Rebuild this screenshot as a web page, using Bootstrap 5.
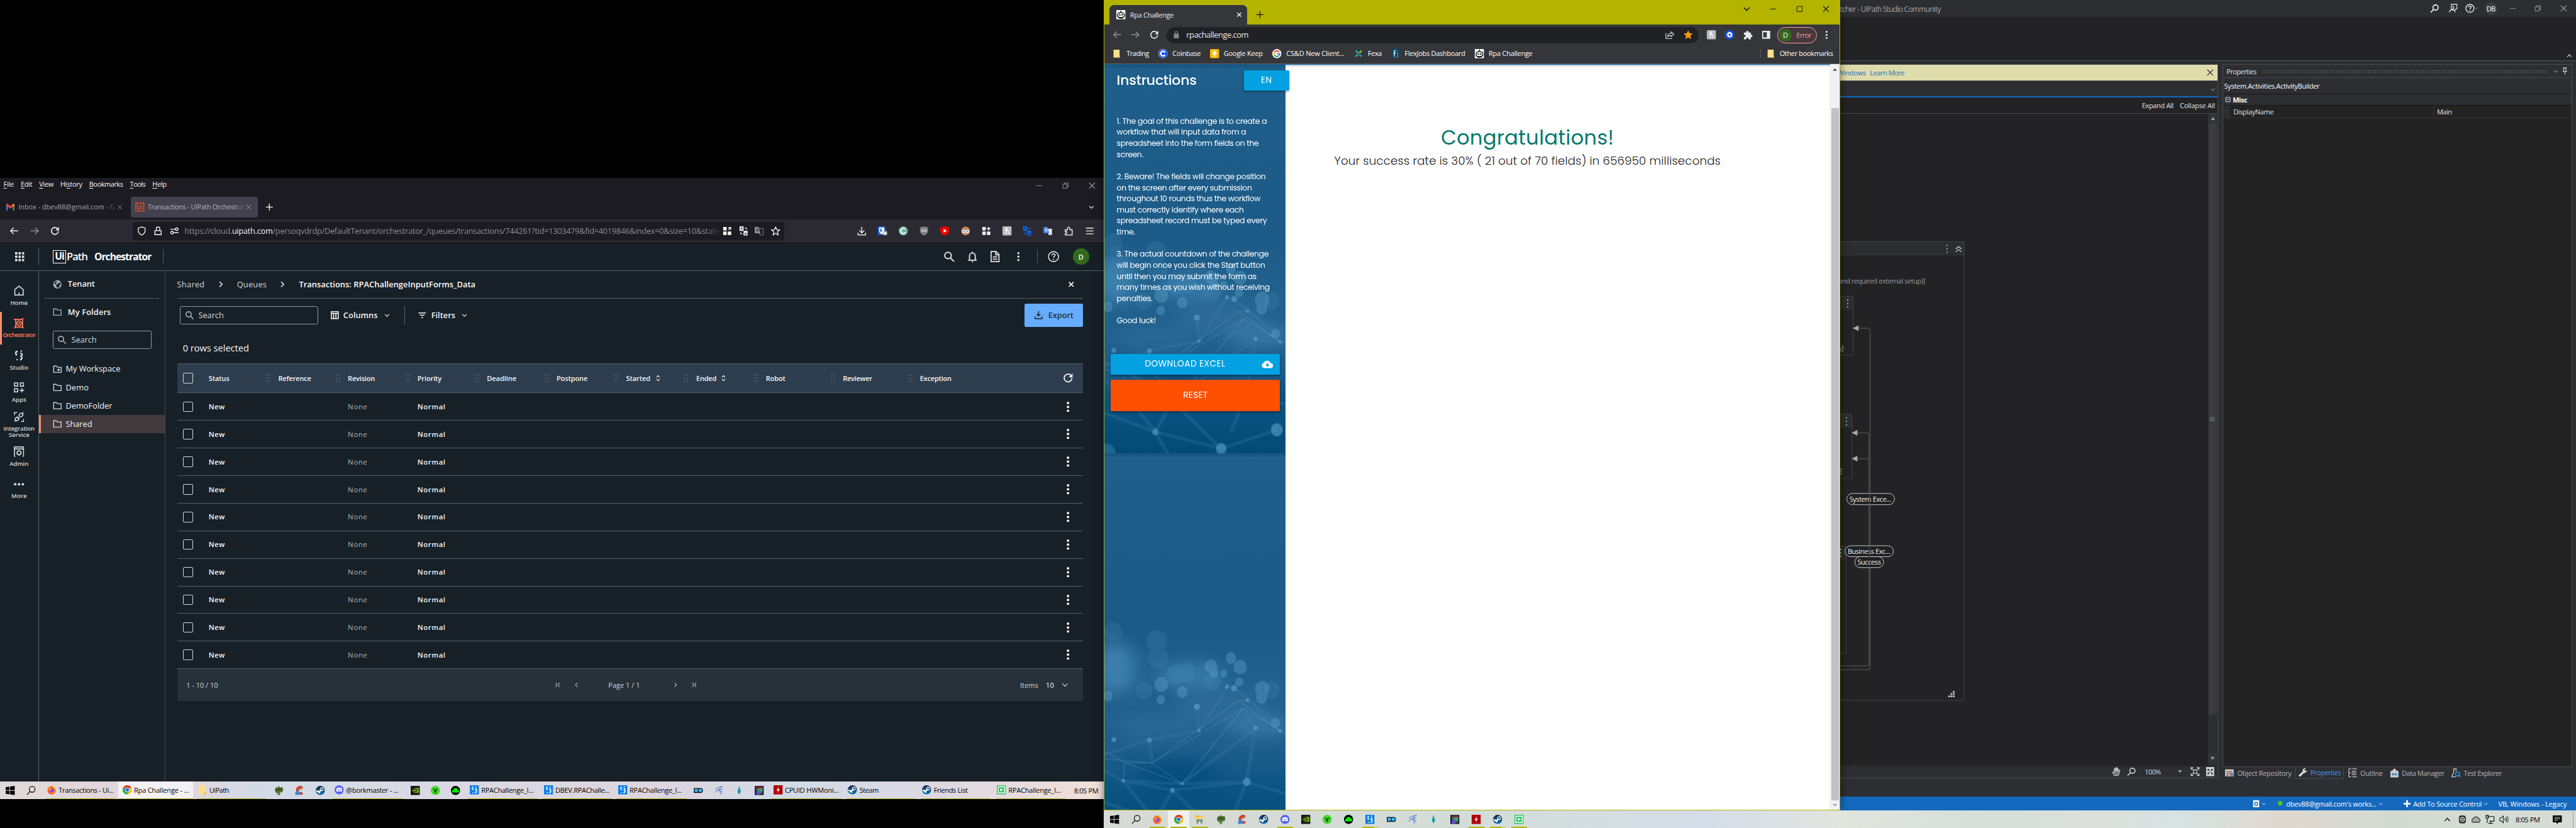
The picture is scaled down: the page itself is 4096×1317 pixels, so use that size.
<!DOCTYPE html>
<html lang="en">
<head>
<meta charset="utf-8">
<title>Desktop</title>
<link href="https://cdn.jsdelivr.net/npm/bootstrap@5.3.0/dist/css/bootstrap.min.css" rel="stylesheet">
<style>
html,body{margin:0;background:#000;overflow:hidden}
#zoomer{zoom:.9142857;width:4480px;height:1441px;overflow:hidden}
#desk{width:4480px;height:1441px;position:relative;background:#000;font:12px/1.2 "Open Sans","Noto Sans",sans-serif;color:#fff;overflow:hidden}
#desk *{letter-spacing:inherit}
.win{position:absolute;overflow:hidden}
.bar{display:grid;align-items:center;justify-items:start;white-space:nowrap;align-content:center}
.ic{width:16px;height:16px;fill:currentColor;stroke:none;display:block;flex:none;overflow:visible}
.i12{width:12px;height:12px}.i20{width:20px;height:20px}.i24{width:24px;height:24px}.i10{width:10px;height:10px}.i18{width:18px;height:18px}.i14{width:14px;height:14px}
.fade-r{-webkit-mask-image:linear-gradient(90deg,#000 88%,transparent);mask-image:linear-gradient(90deg,#000 88%,transparent)}
.cut{line-height:24px}
/* firefox */
.ff{left:0;top:310px;width:1920px;height:1080px;background:#1c1b22}
.ff-menu{height:28px;padding-left:6px;padding-bottom:7px;grid-template-columns:30px 32px 37px 50px 71px 39px 1534px 46px 46px 30px;font-size:12px;color:#f4f4f8}
.ff-menu u{text-underline-offset:2px}
.ff-menu .ic{color:#9a9aa2;margin-top:6px}
.ff-strip{height:44px;grid-template-columns:227px 234px 1431px 28px}
.ff-tab{height:36px;width:221px;border-radius:4px;grid-template-columns:22px 171px 20px;padding-left:8px;color:#b8b8c0}
.ff-tab.first{padding-left:10px;grid-template-columns:22px 170px 20px;color:#a9a8b4}
.ff-tab.on{background:#42414d;grid-template-columns:22px 170px 20px}
.ff-tab .cut{width:170px;overflow:hidden}
.ff-nav{height:40px;background:#2b2a33;grid-template-columns:36px 36px 143px 1260px repeat(12,36px);padding-left:16px;color:#f0f0f5}
.ff-url{height:32px;width:1133px;background:#1c1b22;border-radius:4px;grid-template-columns:28px 28px 26px 936px 28px 28px 28px 28px;padding-left:8px;font-size:14px;color:#908f99}
.ff-url b{font-weight:400;color:#fbfbfe}
.ff-url .cut{width:934px;-webkit-mask-image:linear-gradient(90deg,#000 97%,transparent);mask-image:linear-gradient(90deg,#000 97%,transparent)}
/* orchestrator */
.orch{background:#182027;height:938px;border-top:1px solid #0c0c0d;font-family:"Open Sans","Noto Sans",sans-serif;color:#f4f5f7}
.o-head{height:48px;border-bottom:1px solid #526069;grid-template-columns:41px 25px 24px 48px 119px 1358px 40px 40px 42px 41px 18px 44px 40px;padding-left:26px;color:#dfe4e8}
.vline{width:1px;background:#526069;height:28px}
.vline.s{height:24px}
.o-logo{font:700 17px/18px "Open Sans",sans-serif;border:2px solid #fff;width:23px;height:23px;color:#fff;text-align:center}
.o-name{font-size:18px;line-height:22px;color:#fff;font-weight:600}
.o-name.b{font-size:17px;font-weight:700}
.rail{width:68px;height:889px;border-right:1px solid #526069;padding-top:16px;color:#cfd8dd;font-weight:600;font-size:10.5px;line-height:10px}
.rail div{height:56px;border-left:4px solid transparent;padding-right:4px;padding-top:10px;display:flex;flex-direction:column;align-items:center;text-align:center;gap:7px;white-space:nowrap}
.rail div.on{border-color:#ff8d6f;color:#ff7a59}
.rail .two{padding-top:5px}
.tree{width:220px;border-right:1px solid #3f4b54;font-size:14px}
.tree .t1{height:48px;margin:0 10px;border-bottom:1px solid #526069;grid-template-columns:26px 1fr;padding-left:14px;font-weight:600}
.tree .t2{height:48px;grid-template-columns:26px 1fr;padding-left:24px;font-weight:600}
.tree .ic,.o-soft{color:#a4b1b8}
.o-box{border:1px solid #8b9aa3;border-radius:3px;height:32px;color:#cfd8dd;font-size:14px}
.tree .o-box{margin:8px 0 19px 24px;width:172px;grid-template-columns:24px 1fr;padding-left:7px}
.tree .leaf{height:32px;grid-template-columns:22px 1fr;padding-left:21px;border-left:4px solid transparent}
.tree .leaf .ic{color:#cfd8dd}
.tree .leaf.on{background:#41393c;border-color:#ff8d6f}
.main{padding:0 37px 0 20px;width:1632px}
.crumb{height:49px;border-bottom:1px solid #526069;grid-template-columns:68px 36px 72px 36px 1335px 16px;font-size:14px;font-weight:500;color:#cfd8dd}
.crumb b{font-weight:600;color:#fff}
.acts{height:57px;grid-template-columns:261px 23px 70px 36px 23px 24px 52px 980px 101px;padding-left:5px;font-size:14px;font-weight:600}
.acts .vline{height:32px}
.acts .o-box{width:240px;grid-template-columns:24px 1fr;padding-left:7px;font-weight:400}
.x-export{height:40px;width:101px;background:#66adff;color:#273139;border-radius:3px;padding-left:16px;grid-template-columns:25px 1fr}
.rowsel{height:55px;font-size:16px;padding:19px 0 0 10px}
.th-bar{height:52px;background:#2e3d4d;border:1px solid #526069;border-width:1px 0;font-size:12px;font-weight:600;padding-left:10px;grid-template-columns:45px 99px 22px 99px 22px 99px 22px 99px 22px 99px 22px 99px 22px 50px 49px 23px 42px 57px 22px 112px 22px 112px 22px 249px 26px}
.grip{width:10px;height:16px;background:radial-gradient(circle,#4a5a6a 1.1px,transparent 1.5px) 0 0/5px 5.3px}
.tr-bar{height:48px;border-bottom:1px solid #526069;font-size:12.5px;font-weight:600;padding-left:10px;grid-template-columns:45px 242px 121px 1122px 20px}
.tr-bar .n{font-weight:400;color:#aab6bd}
.cbx{width:18px;height:18px;border:2px solid #cfd8dd;border-radius:2px}
.foot{height:56px;background:#273139;font-size:12px;color:#cfd8dd;grid-template-columns:638px 32px 64px 109px 32px 575px 45px 26px 20px;padding-left:16px}
/* taskbars */
.tb{height:30px;color:#000;font-size:12px}
.tb-l{background:linear-gradient(90deg,#e0d9d9,#e4d5dc 15%,#d2dbe6 24%,#dbd8e2 45%,#ddd5df 60%,#d2dbe6 72%,#ddd8e2 85%,#f2dfd8);grid-template-columns:36px 43px 127px 135px 126px 36px 36px 40px 125px 35px 35px 40px 129px 129px 125px 36px 35px 35px 39px 130px 129px 130px 137px 52px}
.cell{width:36px;height:30px;display:flex;align-items:center;justify-content:center}
.task{width:122px;height:30px;display:flex;align-items:center;gap:4px;padding-left:3px;border-bottom:2px solid #b3b300}
.task.on{background:#f4f1f5;width:130px;padding-left:7px}
.tb-r{left:1920px;top:1410px;width:2560px;height:31px;background:linear-gradient(90deg,#d7d9d5,#d3ddd7 25%,#d4dde8 41%,#e2e4de 50%,#d4dfd8 60%,#dcdfda 67%,#d6e2e1 73%,#dfd8d0 80%,#d2dad2 88%,#d6dcd5);display:flex;align-items:center;justify-content:space-between}
.tb-r .cell{width:37px;height:31px;border-bottom:3px solid transparent;padding-top:3px;position:relative}
.tb-r .run::after{content:"";position:absolute;left:5px;bottom:-3px;width:28px;height:3px;background:#b3b300}
.tb-r .run.two::after{background:linear-gradient(90deg,#b3b300 72%,#cdcd70 72%)}
.tb-r .cell.on{background:#f0f1ef}
.tray{grid-template-columns:25px 24px 24px 24px 29px 64px 36px 5px;height:31px}
.tray .edge{height:31px;width:1px;background:#9aa09b}
/* chrome */
.ch{left:1920px;top:0;width:1280px;height:1410px;background:#35363a;border:1px solid #b3b300;border-top:0;overflow:visible;box-shadow:0 0 14px rgba(0,0,0,.5)}
.ch-top{height:43px;background:#b3b300;grid-template-columns:254px 847px 46px 46px 46px 24px;padding-left:8px;color:#111}
.ch-tab{height:34px;width:240px;margin-top:9px;border-radius:8px 8px 0 0;background:#35363a;grid-template-columns:24px 183px 14px;padding-left:12px;color:#eee}
.ch-top .up{margin-bottom:12px}
.ch-top .pl{margin-top:9px}
.ch-nav{height:36px;grid-template-columns:32px 32px 30px 939px 32px 32px 32px 27px 79px 20px;padding-left:14px;color:#e8eaed}
.ch-omni{height:28px;width:925px;border-radius:14px;background:#202124;grid-template-columns:24px 833px 32px 20px;padding-left:10px;font-size:14px}
.ch-err{height:28px;width:69px;border-radius:14px;border:1px solid #f5a199;background:#46383c;color:#f5a199;grid-template-columns:30px 1fr;padding-left:2px}
.ava{border-radius:50%;background:#33691e;color:#fff;display:grid;place-items:center}
.ch-err .ava{width:22px;height:22px;font-size:12px}
.ava28{width:28px;height:28px;font-size:12px;font-weight:600}
.ch-bm{height:33px;border-bottom:1px solid #5f6368;grid-template-columns:24px 56px 24px 65px 24px 85px 24px 118px 24px 40px 24px 122px 24px 472px 11px 23px 1fr;padding-left:14px;padding-bottom:4px}
.ch-bm .vline{height:16px}
.ch-page{height:1297px;background:#fff;display:flex;position:relative}
.ins{width:315px;height:1297px;position:relative;background:#1d5c89;font-family:Poppins,Lato,Inter,sans-serif}
.ins .sky{position:absolute;inset:0;overflow:hidden}
.ins .sky svg{display:block;width:315px;height:677px}
.ins .sky svg+svg{box-shadow:inset 0 3px 4px #0d4a72}
.ins .body-t{position:relative;padding:0 10px 0 11px}
.ins h5{font-size:24px;line-height:28px;font-weight:500;margin:1px 0 0 10px}
.ins .hd{height:90px;padding-top:13px}
.en{width:79px;height:36px;background:#03a1e2;border-radius:2px;display:grid;place-items:center;font-size:15px;margin-right:-16px;margin-top:-3px;box-shadow:0 2px 4px rgba(0,0,0,.35)}
.lines{margin-left:10px;font:13.5px/19.27px Poppins,Lato,sans-serif;height:415px;margin-top:-1px;font-weight:400}
.lines div{white-space:nowrap}
.x-down,.x-reset{display:grid;align-items:center;border-radius:2px;box-shadow:0 2px 4px rgba(0,0,0,.4);font-size:15px}
.x-down{height:36px;background:#03a1e2;grid-template-columns:200px 1fr;padding-left:59px;margin-bottom:9px;justify-items:start}
.x-down .ic{margin-left:3px;width:20px}
.x-reset{height:54px;background:#ff5000;justify-items:center}
.result{flex:1;text-align:center;border-top:2px solid #0b78c4;box-shadow:inset 0 3px 3px -1px #bbb;padding-top:103px;padding-right:106px;font-family:Poppins,Lato,sans-serif}
.result .r1{font-size:35px;line-height:46px;color:#00796b;font-weight:400}
.result .r2{font-size:20px;line-height:24px;color:#212121;margin-top:6px;font-weight:300}
.sb{width:16px;background:#f1f1f1;padding:76px 1px 0 2px;position:relative}
.sb .thumb{height:1204px;background:#c1c1c1}
.sb svg{position:absolute;left:4px}
.sb .a1{top:5px}.sb .a2{bottom:4px}
/* studio */
.st{left:3200px;top:0;width:1280px;height:1410px;background:#2d2e32;color:#e0e0e0}
.st-top{height:30px;grid-template-columns:1026px 32px 29px 16px 18px 41px 44px 44px 20px;color:#a0a0a0;font-size:13px}
.st-top .ava{width:22px;height:22px;background:#3c3e42;color:#fff;font-size:12px}
.st-rib{height:76px;background:#232325;border-bottom:1px solid #55565a;display:flex;justify-content:flex-end;align-items:flex-end;padding:0 5px 2px}
.st-mid{display:flex;gap:7px;padding-top:6px;height:1249px}
.st-doc{width:658px;border-right:1px solid #4a4b50;height:1243px}
.st-warn{height:29px;background:#dfdcac;border-bottom:1px solid #4a4b50;border-top:1px solid #4a4b50;color:#1a72bd;grid-template-columns:52px 584px 16px}
.st-warn .clip-l{width:45px;overflow:hidden;direction:rtl}
.st-crumb{height:26px;display:flex;justify-content:flex-end;align-items:center;padding:4px 4px 0}
.st-exp{height:31px;border-top:3px solid #1468bd;border-bottom:1px solid #4a4b50;background:#232325;grid-template-columns:66px 62px;padding-left:525px}
.st-can{height:1134px;background:#232325;display:flex}
.st-can>svg{width:640px;height:1134px}
.st-sb{width:16px;background:#2d2e32;display:flex;flex-direction:column;align-items:center;color:#8a8b90}
.st-sb .ar{height:17px;display:grid;place-items:center;background:#333438;width:16px}
.st-sb .th{height:1029px;width:14px;background:#3b3b40;display:grid;place-items:center}
.st-zoom{height:22px;border-bottom:1px solid #4a4b50;grid-template-columns:26px 31px 58px 22px 26px 20px;padding-left:473px;color:#d0d0d0}
.st-prop{width:608px;height:1222px;border:1px solid #4a4b50;background:#232323}
.pr-t{height:23px;background:#2d2e32;border-bottom:1px solid #4a4b50;grid-template-columns:61px 506px 14px 20px;padding-left:6px}
.dotline{width:498px;height:6px;background:radial-gradient(circle,#77787c .8px,transparent 1.1px) 0 0/4px 3px}
.pr-s{height:28px;background:#2d2e32;border-bottom:1px dotted #000;padding-left:2px}
.pr-m{height:20px;background:#2d2e32;border-bottom:1px dotted #000;grid-template-columns:15px 1fr;padding-left:2px}
.pr-d{height:22px;border-bottom:1px solid #333;border-left:13px solid #2d2e32;grid-template-columns:348px 1fr;padding-left:6px}
.pr-d>:last-child{border-left:1px solid #333;padding-left:5px;line-height:21px}
.st-tabs{height:21px;grid-template-columns:21px 100px 88px 22px 51px 21px 87px 21px 80px;padding-left:5px;color:#b4b5b9}
.st-tabs .on{height:21px;width:85px;border:1px solid #4a4b50;border-top:0;color:#3b9fee;padding-left:4px;grid-template-columns:22px 1fr}
.st-blue{margin-top:31px;height:24px;background:#1469be;color:#fff;grid-template-columns:15px 30px 14px 160px 42px 19px 121px 27px 120px;padding-left:717px}
</style>
<script src="https://cdn.jsdelivr.net/npm/bootstrap@5.3.0/dist/js/bootstrap.bundle.min.js"></script>
</head>
<body>
<svg width="0" height="0" class="position-absolute">
<defs>
<filter id="b30" x="-50%" y="-50%" width="200%" height="200%"><feGaussianBlur stdDeviation="34"/></filter>
<filter id="b4"><feGaussianBlur stdDeviation="4"/></filter>
<linearGradient id="sea" x1="0" y1="0" x2="0" y2="1"><stop offset="0" stop-color="#1e5f8b"/><stop offset=".1" stop-color="#1f5e8a"/><stop offset=".45" stop-color="#1c5b88"/><stop offset=".6" stop-color="#23628f"/><stop offset=".75" stop-color="#205f8e"/><stop offset=".86" stop-color="#0b5482"/><stop offset="1" stop-color="#034b76"/></linearGradient>
<linearGradient id="stm" x1="0" y1="0" x2="0" y2="1"><stop offset="0" stop-color="#16214a"/><stop offset="1" stop-color="#1379b8"/></linearGradient>
<symbol id="tile" viewBox="46 -322 707 1966" preserveAspectRatio="none">
<path fill="url(#sea)" d="M46-322h707v1966H46z"/>
<g filter="url(#b30)"><ellipse cx="90" cy="760" rx="75" ry="130" fill="#4a8dbb" opacity=".7"/><ellipse cx="380" cy="800" rx="130" ry="70" fill="#4387b7" opacity=".6"/><ellipse cx="500" cy="960" rx="170" ry="90" fill="#37749f" opacity=".5"/><ellipse cx="650" cy="1050" rx="130" ry="60" fill="#4380ad" opacity=".6"/><ellipse cx="250" cy="1060" rx="160" ry="60" fill="#2f6d9c" opacity=".6"/><ellipse cx="330" cy="1300" rx="150" ry="80" fill="#004a77" opacity=".6"/></g>
<g stroke="#3f7fac" opacity=".3" stroke-width="14" filter="url(#b4)" fill="none"><path d="M46 1200 222 1126 416 1078 525 860M552 865 715 1040M407 958 416 1078M222 1126 232 1243M350 1345 636 1068 600 1338 350 1348 120 1333 46 1280M636 1068 760 1090M312 1380 600 1340 760 1400M312 1380 120 1333 245 1536 46 1440M312 1380 245 1536 300 1660M312 1380 502 1621 719 1525M600 1340 540 1540M502 1621 245 1536M636 1068 588 965"/></g>
<g stroke="#6aa6ce" opacity=".45" stroke-width="2.500" fill="none"><path d="M46 1185 125 1240 232 1243 588 965 350 1347 125 1240 120 1333M46 1222 232 1243 570 928 732 1080M232 1243 350 1347M588 965 732 1080M570 928 605 926"/></g>
<g fill="#5fa3cc" opacity=".14"><ellipse cx="250" cy="625" rx="40" ry="54"/><ellipse cx="255" cy="710" rx="40" ry="54"/><ellipse cx="80" cy="580" rx="36" ry="48"/><ellipse cx="325" cy="795" rx="36" ry="50"/><ellipse cx="365" cy="785" rx="36" ry="48"/><ellipse cx="200" cy="875" rx="32" ry="44"/><ellipse cx="468" cy="830" rx="34" ry="44"/><ellipse cx="700" cy="875" rx="30" ry="44"/></g>
<g fill="#5fa8d0" opacity=".36"><ellipse cx="60" cy="904" rx="18" ry="27"/><ellipse cx="268" cy="846" rx="27" ry="38"/><ellipse cx="266" cy="923" rx="17" ry="24"/><ellipse cx="350" cy="884" rx="21" ry="29"/><ellipse cx="462" cy="754" rx="25" ry="33"/><ellipse cx="474" cy="788" rx="17" ry="24"/><ellipse cx="512" cy="792" rx="13" ry="19"/><ellipse cx="540" cy="713" rx="20" ry="30"/><ellipse cx="576" cy="758" rx="26" ry="36"/><ellipse cx="572" cy="833" rx="16" ry="23"/><ellipse cx="662" cy="868" rx="28" ry="40"/><ellipse cx="660" cy="913" rx="22" ry="30"/><ellipse cx="714" cy="1040" rx="18" ry="25"/></g>
<g fill="#62a8d0" opacity=".55"><ellipse cx="525" cy="856" rx="8" ry="11"/><ellipse cx="552" cy="865" rx="12" ry="16"/><ellipse cx="407" cy="958" rx="12" ry="16"/><ellipse cx="605" cy="925" rx="7" ry="9"/><ellipse cx="416" cy="1078" rx="6" ry="9"/><ellipse cx="222" cy="1127" rx="9" ry="13"/><ellipse cx="83" cy="1124" rx="9" ry="13"/><ellipse cx="732" cy="1080" rx="7" ry="9"/><ellipse cx="636" cy="1066" rx="8" ry="10"/><ellipse cx="350" cy="1347" rx="6" ry="8"/><ellipse cx="312" cy="1380" rx="9" ry="13"/><ellipse cx="120" cy="1333" rx="7" ry="9"/><ellipse cx="602" cy="1338" rx="15" ry="21"/><ellipse cx="245" cy="1536" rx="12" ry="17"/><ellipse cx="719" cy="1525" rx="23" ry="33"/><ellipse cx="502" cy="1621" rx="20" ry="29"/><ellipse cx="52" cy="1640" rx="38" ry="46" opacity=".5"/></g>
<path d="M46-322h707v16H46z" fill="#0d4a72" opacity=".3"/>
</symbol>
<symbol id="min" viewBox="0 0 16 16"><path d="M3 8h10" stroke="currentColor"/></symbol>
<symbol id="max" viewBox="0 0 16 16"><path d="M3.500 3.500h9v9h-9z" fill="none" stroke="currentColor"/></symbol>
<symbol id="rest" viewBox="0 0 16 16"><path d="M3.500 5.500h7v7h-7zM5.500 5V3.500h7v7H11" fill="none" stroke="currentColor"/></symbol>
<symbol id="x" viewBox="0 0 16 16"><path d="M3 3l10 10M13 3L3 13" fill="none" stroke="currentColor" stroke-width="1.200"/></symbol>
<symbol id="xb" viewBox="0 0 16 16"><path d="M4 4l8 8M12 4L4 12" fill="none" stroke="currentColor" stroke-width="1.800"/></symbol>
<symbol id="plus" viewBox="0 0 16 16"><path d="M8 2v12M2 8h12" fill="none" stroke="currentColor" stroke-width="1.400"/></symbol>
<symbol id="dn" viewBox="0 0 16 16"><path d="M3 5.500l5 5 5-5" fill="none" stroke="currentColor" stroke-width="1.500"/></symbol>
<symbol id="rt" viewBox="0 0 16 16"><path d="M5.500 3.500l4.500 4.500-4.500 4.500" fill="none" stroke="currentColor" stroke-width="1.800"/></symbol>
<symbol id="lt" viewBox="0 0 16 16"><path d="M10 4.500L6.500 8l3.500 3.500" fill="none" stroke="currentColor" stroke-width="1.300"/></symbol>
<symbol id="gt" viewBox="0 0 16 16"><path d="M6 4.500L9.500 8 6 11.500" fill="none" stroke="currentColor" stroke-width="1.300"/></symbol>
<symbol id="ltl" viewBox="0 0 16 16"><path d="M11 4.500L7.500 8l3.500 3.500M5 4v8" fill="none" stroke="currentColor" stroke-width="1.300"/></symbol>
<symbol id="rtl" viewBox="0 0 16 16"><path d="M5 4.500L8.500 8 5 11.500M11 4v8" fill="none" stroke="currentColor" stroke-width="1.300"/></symbol>
<symbol id="up" viewBox="0 0 16 16"><path d="M3 11l5-5.500 5 5.500" fill="none" stroke="currentColor" stroke-width="1.600"/></symbol>
<symbol id="back" viewBox="0 0 16 16"><path d="M15 8H2M7.500 2.500L2 8l5.500 5.500" fill="none" stroke="currentColor" stroke-width="1.600"/></symbol>
<symbol id="fwd" viewBox="0 0 16 16"><path d="M1 8h13M8.500 2.500L14 8l-5.500 5.500" fill="none" stroke="currentColor" stroke-width="1.600"/></symbol>
<symbol id="rel" viewBox="0 0 16 16"><path d="M14 8.500a6 6 0 1 1-2-5l2 2" fill="none" stroke="currentColor" stroke-width="1.800"/><path d="M15 1v6H9z"/></symbol>
<symbol id="shield" viewBox="0 0 16 16"><path d="M8 1l6 2.200v3.500c0 4-2.500 7-6 8.500-3.500-1.500-6-4.500-6-8.500V3.200z" fill="none" stroke="currentColor" stroke-width="1.400"/></symbol>
<symbol id="lock" viewBox="0 0 16 16"><path d="M2.500 7.500h11v7h-11zM5 7V4a3 3 0 0 1 6 0v3" fill="none" stroke="currentColor" stroke-width="1.500"/></symbol>
<symbol id="lockf" viewBox="0 0 16 16"><path d="M3 6h10v9H3z"/><path d="M5.500 7V4a2.500 2.500 0 0 1 5 0v3" fill="none" stroke="currentColor" stroke-width="1.500"/></symbol>
<symbol id="perm" viewBox="0 0 16 16"><g fill="none" stroke="currentColor" stroke-width="1.500"><path d="M1 5h8M7 11h8"/><circle cx="12" cy="5" r="2.300"/><circle cx="4" cy="11" r="2.300"/></g></symbol>
<symbol id="sq4" viewBox="0 0 16 16"><path d="M1 1h6v6H1zM9 9h6v6H9zM1 9h6v6H1z"/><path d="M10 6l4-4m-4 0h4v4" fill="none" stroke="currentColor" stroke-width="1.500"/></symbol>
<symbol id="sqp" viewBox="0 0 16 16"><path d="M1 1h6v6H1zM9 9h6v6H9zM1 9h6v6H1zM11 1h2v6h-2zM9 3h6v2H9z"/></symbol>
<symbol id="tr1" viewBox="0 0 16 16"><path d="M1 0h7v8H1zM8 8h7v8H8z"/><path d="M10 3h3v3M6 13H3v-3" fill="none" stroke="currentColor" stroke-width="1.300"/><path d="M2.500 2.500h4M4.500 1.500v1c0 2-1 3-2 3.500M3.500 3c.5 2 1.500 3 3 3.500M10 11.500c2-1 3 0 3 1v2c-3 .5-3.500-.5-3-1.500.5-.7 1.500-.5 3-.5" fill="none" stroke="#1c1b22" stroke-width=".8"/></symbol>
<symbol id="tr2" viewBox="0 0 16 16"><path d="M6 4h9v11H9z" fill="none" stroke="currentColor"/><path d="M0 1h7l3 11H0z"/><path d="M3 9l2-6 2 6M3.700 7.500h2.500M10 8h4M12 7c0 3-1 4-2 5" fill="none" stroke="#1c1b22" stroke-width=".9"/></symbol>
<symbol id="tr3" viewBox="0 0 16 16"><path d="M7 4h8v11H9z" fill="#dfe3ea"/><path d="M0 1h7l3 11H0z" fill="#3f7df0"/><path d="M3 9l2-6 2 6M3.700 7.500h2.500M10 8h4M12 7c0 3-1 4-2 5" fill="none" stroke="#fff" stroke-width="1"/></symbol>
<symbol id="star" viewBox="0 0 16 16"><path d="M8 1l2 4.800 5 .4-3.800 3.300L12.400 15 8 12l-4.400 3 1.200-5.500L1 6.200l5-.4z" fill="none" stroke="currentColor" stroke-width="1.400"/></symbol>
<symbol id="starf" viewBox="0 0 16 16"><path d="M8 0l2.300 5.300 5.700.6-4.200 3.800L13 15.500 8 12.500l-5 3 1.200-5.800L0 5.900l5.700-.6z" fill="#f99b0c"/></symbol>
<symbol id="dl" viewBox="0 0 16 16"><path d="M8 1v10M3.500 7L8 11.500 12.500 7M1.500 11v4h13v-4" fill="none" stroke="currentColor" stroke-width="1.500"/></symbol>
<symbol id="bw" viewBox="0 0 16 16"><path fill="#175ddc" d="M0 0h13v15H0z"/><path fill="#fff" d="M2 2h9v6c0 3-3 5-4.500 6C5 13 2 11 2 8z"/><path fill="#175ddc" d="M4 4h2.500v7C5 10 4 9 4 8z"/><path d="M9 9h7v6H9z" fill="#ddd"/><path d="M10.500 9V8a2 2 0 0 1 4 0v1" fill="none" stroke="#999"/></symbol>
<symbol id="cc1" viewBox="0 0 16 16"><circle cx="8" cy="8" r="8" fill="#6fb59a"/><path d="M11.500 5a4.500 4.500 0 1 0 .5 5" fill="none" stroke="#fff" stroke-width="2"/></symbol>
<symbol id="ub" viewBox="0 0 16 16"><path d="M8 0l7 2v5c0 5-3 7.500-7 9-4-1.500-7-4-7-9V2z" fill="#7f7f7f"/><path d="M4 5v3c0 2 3 2 3 0V5M10.500 5.500a1.500 2 0 1 0 .1 0z" fill="none" stroke="#fff"/></symbol>
<symbol id="yt" viewBox="0 0 16 16"><path d="M8 0l8 2v5c0 5-4 8-8 9-4-1-8-4-8-9V2z" fill="#e00"/><path fill="#fff" d="M6 4.500l5.500 3.300L6 11z"/></symbol>
<symbol id="face" viewBox="0 0 16 16"><circle cx="8" cy="8" r="7.500" fill="#c98a61"/><circle cx="4.800" cy="9" r="3" fill="#eee"/><circle cx="11.200" cy="9" r="3" fill="#eee"/><circle cx="4.800" cy="9" r="1.200" fill="#3d7d8c"/><circle cx="11.200" cy="9" r="1.200" fill="#3d7d8c"/></symbol>
<symbol id="honey" viewBox="0 0 16 16"><rect width="16" height="16" rx="2" fill="#bcbcbc"/><path d="M6 3v10M6 9c1-3 4-3 4 0 0 2-.3 3 1.500 3.500M6 3c3-1 3 3 0 5" fill="none" stroke="#fff" stroke-width="1.300"/></symbol>
<symbol id="puz" viewBox="0 0 16 16"><path d="M2 6h4V3.500a2 2 0 0 1 4 0V6h4v9H2v-3h1.500a1.500 1.500 0 0 0 0-3H2z" fill="none" stroke="currentColor" stroke-width="1.500"/></symbol>
<symbol id="puzf" viewBox="0 0 16 16"><path d="M1 4h4V3a2 2 0 0 1 4 0v1h4v4h1a2 2 0 0 1 0 4h-1v4H9v-1a2 2 0 0 0-4 0v1H1v-4h1a2 2 0 0 0 0-4H1z"/></symbol>
<symbol id="burg" viewBox="0 0 16 16"><path d="M2 3h13M2 8h13M2 13h13" stroke="currentColor" stroke-width="1.500"/></symbol>
<symbol id="gm" viewBox="0 0 16 16"><path d="M1 14V3l2.500 2v9z" fill="#4285f4"/><path d="M12.500 14V5L15 3v11z" fill="#34a853"/><path d="M1 3l2-1 5 4.500L13 2l2 1v2L8 11 1 5z" fill="#ea4335"/><path d="M12.500 4.500L15 3v3l-2.500 2z" fill="#fbbc04"/></symbol>
<symbol id="ui" viewBox="0 0 16 16"><path d="M1 1h14v14H1z" fill="none" stroke="#fa4616" stroke-width="1.600"/><path d="M4 4v5c0 3.500 4.500 3.500 4.500 0V4M11.500 6.500V12M11.500 3.500v1.500" fill="none" stroke="#fa4616" stroke-width="1.600"/></symbol>
<symbol id="g9" viewBox="0 0 16 16"><path d="M0 0h4v4H0zM6 0h4v4H6zM12 0h4v4h-4zM0 6h4v4H0zM6 6h4v4H6zM12 6h4v4h-4zM0 12h4v4H0zM6 12h4v4H6zM12 12h4v4h-4z"/></symbol>
<symbol id="find" viewBox="0 0 16 16"><g fill="none" stroke="currentColor" stroke-width="1.800"><circle cx="6.500" cy="6.500" r="4.500"/><path d="M10 10l5 5"/></g></symbol>
<symbol id="bell" viewBox="0 0 16 16"><path d="M2 13h12M4 12.500V7a4 4 0 0 1 8 0v5.500M8 1v2M7 15.300h2" fill="none" stroke="currentColor" stroke-width="1.600"/></symbol>
<symbol id="doc" viewBox="0 0 16 16"><path d="M2.500 1h7L13.500 5v10h-11zM5 8.500h6M5 11.500h6M9 1v4.500h4" fill="none" stroke="currentColor" stroke-width="1.500"/></symbol>
<symbol id="d3" viewBox="0 0 16 16"><circle cx="8" cy="2" r="1.900"/><circle cx="8" cy="8" r="1.900"/><circle cx="8" cy="14" r="1.900"/></symbol>
<symbol id="h3" viewBox="0 0 16 16"><circle cx="2" cy="8" r="2"/><circle cx="8" cy="8" r="2"/><circle cx="14" cy="8" r="2"/></symbol>
<symbol id="help" viewBox="0 0 16 16"><circle cx="8" cy="8" r="7" fill="none" stroke="currentColor" stroke-width="1.400"/><path d="M5.800 6.300C5.800 3 10.400 3.300 10.200 6 10 7.600 8 7.700 8 9.600M8 11v1.500" fill="none" stroke="currentColor" stroke-width="1.400"/></symbol>
<symbol id="home" viewBox="0 0 16 16"><path d="M1.500 15V6.500L8 1l6.500 5.500V15zM8 15v-4" fill="none" stroke="currentColor" stroke-width="1.600"/></symbol>
<symbol id="orc" viewBox="0 0 16 16"><g fill="none" stroke="currentColor" stroke-width="1.700"><path d="M0 2h12l3-2M1 14h14M3 1v11l-2 4M13.500 2v12l1 2"/><circle cx="8.200" cy="8" r="3.500"/></g><circle cx="8.200" cy="8" r="1.400"/></symbol>
<symbol id="stu" viewBox="0 0 16 16"><path d="M6 2C2 2 2 6 5 7.500M10.500 1.500h2M10 8.500c3.500 2 3 6-.5 6.500M4 14.500h2M10 4.500c2 .5 3 2 3 4" fill="none" stroke="currentColor" stroke-width="2.300"/></symbol>
<symbol id="app" viewBox="0 0 16 16"><path d="M1 1h5v5H1zM10 1h5v5h-5zM1 10h5v5H1zM12.500 9v7M9 12.500h7" fill="none" stroke="currentColor" stroke-width="1.600"/></symbol>
<symbol id="int" viewBox="0 0 16 16"><g fill="none" stroke="currentColor" stroke-width="1.500"><path d="M1 5V1h4M15 11v4h-4M12.500 3.500L15 1M3.500 12.500L1 15M6 11l1.500-1.500M5 9.500l1.500-1.500"/><rect x="8" y="2.500" width="6" height="5" rx="2.500" transform="rotate(-45 11 5)"/><rect x="2" y="8.500" width="6" height="5" rx="2.500" transform="rotate(-45 5 11)"/></g></symbol>
<symbol id="adm" viewBox="0 0 16 16"><path d="M1 16V.8h14V16M1 4h14M1 16h2M15 16h-2" fill="none" stroke="currentColor" stroke-width="1.600"/><circle cx="8" cy="10" r="3" fill="none" stroke="currentColor" stroke-width="1.600"/><path d="M8 5.500v2M8 12.500v2M4.300 8l1.700 1M10 11l1.700 1M11.700 8L10 9M6 11l-1.700 1" stroke="currentColor" stroke-width="1.300"/></symbol>
<symbol id="globe" viewBox="0 0 16 16"><circle cx="8" cy="8" r="6.500" fill="none" stroke="currentColor" stroke-width="1.500"/><path d="M2 6l4 3v2l2 3-3-.5C2 12 1.500 9 2 6zM6 2h6v3l-3 1v2H6L5 6l2-1zM11 9l3 0-2 4z"/></symbol>
<symbol id="fol" viewBox="0 0 16 16"><path d="M1.500 2.500h4.500l2 2h6.500v9h-13z" fill="none" stroke="currentColor" stroke-width="1.500"/></symbol>
<symbol id="fols" viewBox="0 0 16 16"><path d="M1.500 2.500h4.500l2 2h6.500v9h-13z" fill="none" stroke="currentColor" stroke-width="1.500"/><path d="M10 6l.9 2 2.100.1-1.600 1.400.5 2L10 10.400l-1.900 1.100.5-2L7 8.100 9.100 8z"/></symbol>
<symbol id="cols" viewBox="0 0 16 16"><path d="M2 2h12v12H2zM2 5h12M6 5v9M10 5v9" fill="none" stroke="currentColor" stroke-width="1.700"/></symbol>
<symbol id="filt" viewBox="0 0 16 16"><path d="M1.500 4h13M4 8h8M6.500 12h3" stroke="currentColor" stroke-width="1.700"/></symbol>
<symbol id="exp" viewBox="0 0 16 16"><path d="M8 1v8M5 6l3 3.500L11 6M2 10v4h12v-4" fill="none" stroke="currentColor" stroke-width="1.900"/></symbol>
<symbol id="sort" viewBox="0 0 16 16"><path d="M4.500 6L8 2l3.500 4M4.500 10L8 14l3.500-4" fill="none" stroke="currentColor" stroke-width="1.500"/></symbol>
<symbol id="wn" viewBox="0 0 16 16"><path d="M0 2.200L6.500 1.300v6.200H0zM7.500 1.200L16 0v7.500H7.500zM0 8.500h6.500v6.200L0 13.800zM7.500 8.500H16V16l-8.500-1.200z" fill="#000"/></symbol>
<symbol id="tf" viewBox="0 0 16 16"><g fill="none" stroke="#000" stroke-width="1.300"><circle cx="10" cy="6" r="5"/><path d="M6.500 9.500L1 15.500"/></g></symbol>
<symbol id="ffx" viewBox="0 0 16 16"><circle cx="8" cy="8.500" r="7.500" fill="#ff7a1f"/><path d="M9 0c4 2 7 5 6.300 9.500C14 5 11 5 9 0z" fill="#ffd53e"/><path d="M1 5c1 7 4 10 9 10.500C5 17 0 13 1 5z" fill="#f0375c"/><circle cx="8" cy="8.500" r="3.600" fill="#8346d8"/><path d="M4 6c2-.5 4 .5 4 2l-3 1z" fill="#ffb12e"/></symbol>
<symbol id="chr" viewBox="0 0 16 16"><circle cx="8" cy="8" r="8" fill="#fbc116"/><path d="M8 8L1 4a8 8 0 0 1 14 0z" fill="#e33b2e"/><path d="M8 8L1 4a8 8 0 0 0 6.500 12L11.500 10z" fill="#2da94f"/><circle cx="8" cy="8" r="3.900" fill="#fff"/><circle cx="8" cy="8" r="3" fill="#1a73e8"/></symbol>
<symbol id="yf" viewBox="0 0 16 16"><path d="M2 0h12v16H2z" fill="#ffe08a"/><path d="M11 12h4v4h-4z" fill="#eac250"/></symbol>
<symbol id="efd" viewBox="0 0 16 16"><path d="M0 1h7l1 2h8v11H0z" fill="#f5b73b"/><path d="M0 4h16v10H0z" fill="#ffd66b"/><path d="M3 8h10v7h-3v-4H6v4H3z" fill="#3c8fdc"/></symbol>
<symbol id="plant" viewBox="0 0 16 16"><path d="M1 6l3-4 2 1 2-3 2 3 4-1 2 5-3 5-2-2-2 2-2-2-3 3-2-3z" fill="#4c6b2c"/><path d="M5 9h6l-1 7H6z" fill="#5f7b45"/><path d="M6 5l3 3 2-4M3 8l3-1" stroke="#2c3f18" stroke-width="1.200" fill="none"/></symbol>
<symbol id="ccl" viewBox="0 0 16 16"><path d="M12 3a5.500 5.500 0 1 0 1 9" fill="none" stroke="#d6372c" stroke-width="4.500"/><path d="M6 6l7-5 2 2-6 5z" fill="#b98253"/><path d="M0 12l6-4 4 4-4 4H1z" fill="#2f8fd8"/></symbol>
<symbol id="steam" viewBox="0 0 16 16"><circle cx="8" cy="8" r="8" fill="url(#stm)"/><path d="M1 8.500l5 2 4-4" fill="none" stroke="#fff" stroke-width="2.500"/><circle cx="10.500" cy="5.700" r="2.600" fill="none" stroke="#fff" stroke-width="1.200"/><circle cx="6" cy="11" r="2" fill="#fff"/></symbol>
<symbol id="disc" viewBox="0 0 16 16"><circle cx="8" cy="8" r="8" fill="#5865f2"/><path d="M4 5c2.500-1.200 5.500-1.200 8 0 1 2 1.200 4 1 5.500l-2.500 1-.7-1H6.200l-.7 1-2.500-1C2.800 9 3 7 4 5z" fill="#fff"/><circle cx="6.200" cy="8" r="1.100" fill="#5865f2"/><circle cx="9.800" cy="8" r="1.100" fill="#5865f2"/></symbol>
<symbol id="nv" viewBox="0 0 16 16"><path d="M0 0h16v16H0z" fill="#1a1a1a"/><path d="M2 8c3-4 7-5 12-4v8H7z" fill="#76b900"/><path d="M3 8c3-4 7-3 8 0-2 3-4 3-5 0" fill="none" stroke="#1a1a1a" stroke-width="1.300"/></symbol>
<symbol id="wasp" viewBox="0 0 16 16"><circle cx="8" cy="8" r="8" fill="#44d62c"/><path d="M4 5l4 3 4-3M8 8v5M7 7h2v3H7z" stroke="#134a0c" stroke-width="1.500" fill="none"/></symbol>
<symbol id="cor" viewBox="0 0 16 16"><circle cx="8" cy="8" r="8" fill="#000"/><path d="M2.500 11.500a3 3 0 0 1 1.500-5 4.200 4.200 0 0 1 8 0 3 3 0 0 1 1.500 5z" fill="#0e0"/></symbol>
<symbol id="sblue" viewBox="0 0 16 16"><path d="M0 0h16v16H0z" fill="#1080e6"/><path d="M6.500 3C3.500 3 4 7 6.500 8M10 2.500h1.500M9.500 8c3.500 1 2.500 5-.5 5M5 13h1.500M9.500 5c1.500.3 2 1 2.300 2.500" fill="none" stroke="#fff" stroke-width="1.800"/></symbol>
<symbol id="pill" viewBox="0 0 16 16"><path d="M1 4.500h6l1 1 1-1h3a3.500 3.500 0 0 1 0 7H9l-1-1-1 1H1z" fill="#3db5f2" stroke="#111" stroke-width="1.500"/><path d="M8 5v6" stroke="#111" stroke-width="1.300"/></symbol>
<symbol id="fea" viewBox="0 0 16 16"><path d="M1 6c4-3 8-5 14-5-3 1-6 3-7 5M8 6l6 0M8 6c-3 1-5 3-6 6M8 7l6 5M9 7l2 8M7 7l3 3" fill="none" stroke="#6d92cf" stroke-width="1.500"/></symbol>
<symbol id="drop" viewBox="0 0 16 16"><path d="M8 0l3 10-3 5-3-5z" fill="#1fa4ae"/><path d="M8 3l1 7-1 4z" fill="#0b6f80"/></symbol>
<symbol id="game" viewBox="0 0 16 16"><path d="M0 0h16v16H0z" fill="#25203a"/><path d="M1 1h14v3H1z" fill="#7c2636"/><path d="M2 6l6-2 6 3-2 6H8L5 9z" fill="#3c9b53"/><circle cx="6" cy="12" r="3.500" fill="#5b4fd0"/><path d="M9 5h4v4" fill="none" stroke="#7fd0e0"/></symbol>
<symbol id="cpu" viewBox="0 0 16 16"><path d="M0 0h16v16H0z" fill="#b00008"/><path d="M9.500 2L5 9h3l-1.500 5L11 7H8z" fill="#fff"/></symbol>
<symbol id="play" viewBox="0 0 16 16"><path d="M0 0h16v16H0z" fill="#2cc665"/><path d="M2.500 2.500h11v11h-11z" fill="none" stroke="#fff" stroke-width="1.600"/><path d="M6 5l5 3-5 3z" fill="#fff"/></symbol>
<symbol id="bot" viewBox="0 0 16 16"><path d="M0 0h16v16H0z" fill="#fff"/><path d="M8 1v3M2 9a6 5 0 0 1 12 0 6 5 0 0 1-12 0z" fill="none" stroke="#111" stroke-width="1.600"/><path d="M2 11c1 5 11 5 12 0 0 0-6 3-12 0z" fill="#111"/><circle cx="6" cy="8.500" r="1.300" fill="#111"/><circle cx="10" cy="8.500" r="1.300" fill="#111"/></symbol>
<symbol id="coin" viewBox="0 0 16 16"><circle cx="8" cy="8" r="8" fill="#fff"/><circle cx="8" cy="8" r="7.500" fill="#1652f0"/><path d="M11.500 6a4 4 0 1 0 0 4" fill="none" stroke="#fff" stroke-width="2.600"/></symbol>
<symbol id="keep" viewBox="0 0 16 16"><rect width="16" height="16" rx="2" fill="#fbb803"/><circle cx="8" cy="7" r="3.500" fill="#fff"/><path d="M6.500 11.500h3v2h-3z" fill="#fff"/></symbol>
<symbol id="goo" viewBox="0 0 16 16"><circle cx="8" cy="8" r="8" fill="#fff"/><g fill="none" stroke-width="2.400"><path d="M12 5A5 5 0 0 0 3.700 5.500" stroke="#ea4335"/><path d="M3.700 5.500a5 5 0 0 0 0 5" stroke="#fbbc05"/><path d="M3.700 10.500a5 5 0 0 0 7.800 1" stroke="#34a853"/><path d="M11.500 11.500A5 5 0 0 0 13 8.200H8" stroke="#4285f4"/></g></symbol>
<symbol id="fexa" viewBox="0 0 16 16"><path d="M3 3l4 4M3 13l4-4" stroke="#1fb5a8" stroke-width="3"/><path d="M13 3L9 7" stroke="#7cc142" stroke-width="3"/><path d="M13 13L9 9" stroke="#1f9bb5" stroke-width="3"/></symbol>
<symbol id="fj" viewBox="0 0 16 16"><path d="M1 0h14v16H1z" fill="#0b4a66"/><path d="M5.500 13V5c0-2 1-3 2.500-2.500M4 7h4" fill="none" stroke="#fff" stroke-width="1.400"/><path d="M11 6v7c0 1.500-1 2-2 1.500M11 3v1.500" fill="none" stroke="#e2574c" stroke-width="1.400"/></symbol>
<symbol id="share" viewBox="0 0 16 16"><path d="M1 5v9.500h11M4 11c.5-4 3-5.500 6-5.500V3l5 4.200-5 4.200V9C7.500 9 5.500 9.500 4 11z" fill="none" stroke="currentColor" stroke-width="1.200"/></symbol>
<symbol id="ring" viewBox="0 0 16 16"><circle cx="8" cy="8" r="8" fill="#1652f0"/><circle cx="8" cy="8" r="3.300" fill="none" stroke="#fff" stroke-width="2.600"/></symbol>
<symbol id="panel" viewBox="0 0 16 16"><path d="M1 1h14v14H1zM3 3.500v9h6v-9z" fill-rule="evenodd"/></symbol>
<symbol id="cdl" viewBox="0 0 24 18"><path d="M6 17a5.500 5.500 0 0 1-1-10.900A7.500 7.500 0 0 1 19 7a5 5 0 0 1 0 10z"/><path d="M11 6h2.500v4h3L12.200 14.500 8 10h3z" fill="#03a1e2"/></symbol>
<symbol id="fb" viewBox="0 0 16 16"><g fill="none" stroke="currentColor" stroke-width="1.200"><circle cx="7" cy="7" r="2.500"/><path d="M2 15c0-6 10-6 10 0M5 3V1h10v8h-2l-2 2"/></g></symbol>
<symbol id="pin" viewBox="0 0 16 16"><path d="M5 2h6M6 2v6M10 2v6M4 8.500h8M8 9v5" fill="none" stroke="currentColor" stroke-width="1.200"/></symbol>
<symbol id="boxm" viewBox="0 0 16 16"><path d="M3 3h10v10H3zM5.500 8h5" fill="none" stroke="#fff" stroke-width="1.300"/></symbol>
<symbol id="hand" viewBox="0 0 16 16"><path d="M4 15L1 9l1-1 2 2V3h1.700v4V1.500h1.800V7 1h1.800v6V2.500H11V8l1-3 2 .5L12.500 12 11 15z" fill="#777" stroke="currentColor"/></symbol>
<symbol id="fit" viewBox="0 0 16 16"><path d="M5 5h6v6H5zM1 5V1h4M11 1h4v4M15 11v4h-4M5 15H1v-4M1 1l4 4M15 1l-4 4M1 15l4-4M15 15l-4-4" fill="none" stroke="currentColor" stroke-width="1.300"/></symbol>
<symbol id="fit2" viewBox="0 0 16 16"><path d="M1 0h14v16H1z"/><path d="M4 4l3 3M12 4L9 7M4 12l3-3M12 12L9 9M4 6V4h2M10 4h2v2M4 10v2h2M10 12h2v-2" fill="none" stroke="#222" stroke-width="1.200"/></symbol>
<symbol id="orep" viewBox="0 0 16 16"><path d="M0 2h15v12H0z" fill="#ccc"/><path d="M2 6h11M2 9h6M2 12h5" stroke="#333"/><path d="M8 8h4v6l-4-2z" fill="#e2573b"/><path d="M12 8h4v4l-4 2z" fill="#3c9be8"/></symbol>
<symbol id="wr" viewBox="0 0 16 16"><path d="M2 15L9 8" stroke="#ddd" stroke-width="3.500"/><path d="M8 6c0-4 3-6 5.500-5L11 4l1.500 2L15 4c1 3-2 6-6 5z" fill="#ddd"/></symbol>
<symbol id="outl" viewBox="0 0 16 16"><path d="M2 1v14M2 1h4M2 8h3M2 15h4M8 1h8M7 5h8M7 8h8M7 11h8M8 15h8" stroke="#ccc" stroke-width="1.300" fill="none"/></symbol>
<symbol id="dm" viewBox="0 0 16 16"><path d="M1 5l3-1 4-4 4 4 3 1v11H1z" fill="#ccc"/><path d="M4 9l3 1.500L4 12M12 9l-3 1.500 3 1.500" stroke="#1f7fd0" stroke-width="1.800" fill="none"/></symbol>
<symbol id="te" viewBox="0 0 16 16"><path d="M3 1h6M4 1v6L0 15h8M8 1v4" fill="none" stroke="#ccc" stroke-width="1.400"/><circle cx="10.500" cy="10" r="3.500" fill="none" stroke="#1f9bf0" stroke-width="1.600"/><path d="M13 12.500l3 3" stroke="#1f9bf0" stroke-width="1.600"/></symbol>
<symbol id="asst" viewBox="0 0 16 16"><path d="M2 1h12v14H2z" fill="#fff"/><circle cx="8" cy="8" r="3" fill="none" stroke="#1469be" stroke-width="1.800"/></symbol>
<symbol id="pl2" viewBox="0 0 16 16"><path d="M6.500 2h3v4.500H14v3H9.500V14h-3V9.500H2v-3h4.500z"/></symbol>
<symbol id="tr-a" viewBox="0 0 16 16"><rect x="2" y="1" width="12" height="14" rx="4" fill="#333"/><circle cx="8" cy="8" r="3.500" fill="none" stroke="#ddd" stroke-width="1.400"/><circle cx="8" cy="8" r="1.300" fill="#ddd"/></symbol>
<symbol id="tr-c" viewBox="0 0 16 16"><path d="M3 13a3 3 0 0 1 0-6 5 5 0 0 1 9-1 4 4 0 0 1 1 7z" fill="#aaa" stroke="#222" stroke-width="1.200"/></symbol>
<symbol id="tr-n" viewBox="0 0 16 16"><path d="M3 3h12v8H7M9 11v4M5 15h8M1 1h4v5H1zM3 6v8" fill="none" stroke="#111" stroke-width="1.300"/></symbol>
<symbol id="tr-s" viewBox="0 0 16 16"><path d="M1 5.500h2L7 2v12l-4-3.500H1zM9.500 6c1 1.200 1 3 0 4M11.500 4c2 2.300 2 6 0 8M13.500 2.500c3 3.300 3 8 0 11" fill="none" stroke="#111" stroke-width="1.100"/></symbol>
<symbol id="tr-m" viewBox="0 0 16 16"><path d="M0 1h16v12h-6l-2 3-2-3H0z" fill="#000"/><path d="M3 4.500h10M3 7h10M3 9.500h6" stroke="#ddd"/></symbol>
</defs>
</svg>
<div id="zoomer"><div id="desk">

<!-- Firefox with UiPath Orchestrator -->
<section class="win ff">
 <div class="bar ff-menu"><span data-w="18"><u>F</u>ile</span><span data-w="20"><u>E</u>dit</span><span data-w="25"><u>V</u>iew</span><span data-w="38">Hi<u>s</u>tory</span><span data-w="59"><u>B</u>ookmarks</span><span data-w="27"><u>T</u>ools</span><span data-w="25"><u>H</u>elp</span><svg class="ic"><use href="#min"/></svg><svg class="ic"><use href="#rest"/></svg><svg class="ic"><use href="#x"/></svg></div>
 <div class="bar ff-strip">
  <div class="bar ff-tab first"><svg class="ic"><use href="#gm"/></svg><span class="cut fade-r"><span data-w="168">Inbox - dbev88@gmail.com - G</span></span><svg class="ic i12"><use href="#x"/></svg></div>
  <div class="bar ff-tab on"><svg class="ic"><use href="#ui"/></svg><span class="cut fade-r"><span data-w="168">Transactions - UiPath Orchestrat</span></span><svg class="ic i12"><use href="#x"/></svg></div>
  <svg class="ic"><use href="#plus"/></svg><svg class="ic i12"><use href="#dn"/></svg>
 </div>
 <div class="bar ff-nav"><svg class="ic"><use href="#back"/></svg><svg class="ic opacity-50"><use href="#fwd"/></svg><svg class="ic"><use href="#rel"/></svg>
  <div class="bar ff-url"><svg class="ic text-light"><use href="#shield"/></svg><svg class="ic text-light"><use href="#lock"/></svg><svg class="ic text-light"><use href="#perm"/></svg><span class="cut"><span data-w="930">https://cloud.<b>uipath.com</b>/persoqvdrdp/DefaultTenant/orchestrator_/queues/transactions/744261?tid=1303479&amp;fid=4019846&amp;index=0&amp;size=10&amp;state</span></span><svg class="ic text-white"><use href="#sq4"/></svg><svg class="ic text-light"><use href="#tr1"/></svg><svg class="ic"><use href="#tr2"/></svg><svg class="ic text-light"><use href="#star"/></svg></div>
  <svg class="ic"><use href="#dl"/></svg><svg class="ic"><use href="#bw"/></svg><svg class="ic"><use href="#cc1"/></svg><svg class="ic"><use href="#ub"/></svg><svg class="ic"><use href="#yt"/></svg><svg class="ic"><use href="#face"/></svg><svg class="ic"><use href="#sqp"/></svg><svg class="ic"><use href="#honey"/></svg><svg class="ic text-primary"><use href="#tr1"/></svg><svg class="ic"><use href="#tr3"/></svg><svg class="ic"><use href="#puz"/></svg><svg class="ic"><use href="#burg"/></svg></div>
 <div class="orch">
  <div class="bar o-head"><svg class="ic"><use href="#g9"/></svg><i class="vline"></i><span class="o-logo"><span data-w="16">Ui</span></span><span class="o-name" data-w="36">Path</span><span class="o-name b" data-w="99">Orchestrator</span><i class="vline s"></i><svg class="ic i20"><use href="#find"/></svg><svg class="ic i20"><use href="#bell"/></svg><svg class="ic i20"><use href="#doc"/></svg><svg class="ic"><use href="#d3"/></svg><i class="vline s"></i><svg class="ic i20"><use href="#help"/></svg><span class="ava ava28">D</span></div>
  <div class="d-flex">
   <nav class="rail"><div><svg class="ic i18"><use href="#home"/></svg>Home</div><div class="on"><svg class="ic i18"><use href="#orc"/></svg><span data-w="57">Orchestrator</span></div><div><svg class="ic i18"><use href="#stu"/></svg>Studio</div><div><svg class="ic i18"><use href="#app"/></svg>Apps</div><div class="two"><svg class="ic i18"><use href="#int"/></svg><span><span data-w="54">Integration</span><br>Service</span></div><div><svg class="ic i18"><use href="#adm"/></svg>Admin</div><div><svg class="ic i18"><use href="#h3"/></svg>More</div></nav>
   <nav class="tree">
    <div class="bar t1"><svg class="ic"><use href="#globe"/></svg><span data-w="47">Tenant</span></div>
    <div class="bar t2"><svg class="ic"><use href="#fol"/></svg><span data-w="75">My Folders</span></div>
    <div class="bar o-box"><svg class="ic"><use href="#find"/></svg><span data-w="44">Search</span></div>
    <div class="bar leaf"><svg class="ic"><use href="#fols"/></svg><span data-w="95">My Workspace</span></div>
    <div class="bar leaf"><svg class="ic"><use href="#fol"/></svg><span data-w="40">Demo</span></div>
    <div class="bar leaf"><svg class="ic"><use href="#fol"/></svg><span data-w="81">DemoFolder</span></div>
    <div class="bar leaf on"><svg class="ic"><use href="#fol"/></svg><span data-w="46">Shared</span></div>
   </nav>
   <main class="main">
    <div class="bar crumb"><span data-w="48">Shared</span><svg class="ic"><use href="#rt"/></svg><span data-w="52">Queues</span><svg class="ic"><use href="#rt"/></svg><b data-w="307">Transactions: RPAChallengeInputForms_Data</b><svg class="ic text-white"><use href="#xb"/></svg></div>
    <div class="bar acts"><div class="bar o-box"><svg class="ic o-soft"><use href="#find"/></svg><span data-w="44">Search</span></div><svg class="ic"><use href="#cols"/></svg><span data-w="60">Columns</span><svg class="ic i12"><use href="#dn"/></svg><i class="vline"></i><svg class="ic"><use href="#filt"/></svg><span data-w="42">Filters</span><svg class="ic i12"><use href="#dn"/></svg><div class="bar x-export"><svg class="ic"><use href="#exp"/></svg><span data-w="44">Export</span></div></div>
    <div class="rowsel"><span data-w="115">0 rows selected</span></div>
    <div class="bar th-bar"><i class="cbx"></i><span data-w="36">Status</span><i class="grip"></i><span data-w="57">Reference</span><i class="grip"></i><span data-w="47">Revision</span><i class="grip"></i><span data-w="42">Priority</span><i class="grip"></i><span data-w="51">Deadline</span><i class="grip"></i><span data-w="54">Postpone</span><i class="grip"></i><span data-w="42">Started</span><svg class="ic i12"><use href="#sort"/></svg><i class="grip"></i><span data-w="35">Ended</span><svg class="ic i12"><use href="#sort"/></svg><i class="grip"></i><span data-w="34">Robot</span><i class="grip"></i><span data-w="51">Reviewer</span><i class="grip"></i><span data-w="55">Exception</span><svg class="ic i18"><use href="#rel"/></svg></div>
    <div id="rows"></div>
    <div class="bar foot"><span data-w="55">1 - 10 / 10</span><svg class="ic o-soft"><use href="#ltl"/></svg><svg class="ic o-soft"><use href="#lt"/></svg><span data-w="55">Page 1 / 1</span><svg class="ic o-soft"><use href="#gt"/></svg><svg class="ic o-soft"><use href="#rtl"/></svg><span data-w="32">Items</span><span data-w="14" class="text-white">10</span><svg class="ic i14"><use href="#dn"/></svg></div>
   </main>
  </div>
 </div>
 <div class="bar tb tb-l">
  <div class="cell"><svg class="ic"><use href="#wn"/></svg></div><div class="cell"><svg class="ic"><use href="#tf"/></svg></div>
  <div class="task"><svg class="ic"><use href="#ffx"/></svg><span data-w="96">Transactions - Ui...</span></div>
  <div class="task on"><svg class="ic"><use href="#chr"/></svg><span data-w="96">Rpa Challenge - ...</span></div>
  <div class="task"><svg class="ic"><use href="#yf"/></svg><span data-w="34">UiPath</span></div>
  <div class="cell"><svg class="ic"><use href="#plant"/></svg></div><div class="cell"><svg class="ic"><use href="#ccl"/></svg></div><div class="cell"><svg class="ic"><use href="#steam"/></svg></div>
  <div class="task"><svg class="ic"><use href="#disc"/></svg><span data-w="91">@borkmaster - ...</span></div>
  <div class="cell"><svg class="ic"><use href="#nv"/></svg></div><div class="cell"><svg class="ic"><use href="#wasp"/></svg></div><div class="cell"><svg class="ic"><use href="#cor"/></svg></div>
  <div class="task"><svg class="ic"><use href="#sblue"/></svg><span data-w="91">RPAChallenge_I...</span></div>
  <div class="task"><svg class="ic"><use href="#sblue"/></svg><span data-w="94">DBEV.RPAChalle...</span></div>
  <div class="task"><svg class="ic"><use href="#sblue"/></svg><span data-w="91">RPAChallenge_I...</span></div>
  <div class="cell"><svg class="ic"><use href="#pill"/></svg></div><div class="cell"><svg class="ic"><use href="#fea"/></svg></div><div class="cell"><svg class="ic"><use href="#drop"/></svg></div><div class="cell"><svg class="ic"><use href="#game"/></svg></div>
  <div class="task"><svg class="ic"><use href="#cpu"/></svg><span data-w="94">CPUID HWMoni...</span></div>
  <div class="task"><svg class="ic"><use href="#steam"/></svg><span data-w="33">Steam</span></div>
  <div class="task"><svg class="ic"><use href="#steam"/></svg><span data-w="59">Friends List</span></div>
  <div class="task"><svg class="ic"><use href="#play"/></svg><span data-w="91">RPAChallenge_I...</span></div>
  <span data-w="42">8:05 PM</span>
 </div>
</section>

<!-- UiPath Studio -->
<section class="win st">
 <div class="bar st-top"><span data-w="175">tcher - UiPath Studio Community</span><svg class="ic text-light" transform="scale(-1 1)"><use href="#find"/></svg><svg class="ic text-light"><use href="#fb"/></svg><svg class="ic text-light"><use href="#help"/></svg><svg class="ic" width="8" viewBox="0 0 16 16" transform="translate(-4 0) scale(.6)"><use href="#dn"/></svg><span class="ava"><span data-w="15">DB</span></span><svg class="ic"><use href="#min"/></svg><svg class="ic"><use href="#rest"/></svg><svg class="ic"><use href="#x"/></svg></div>
 <div class="st-rib"><svg class="ic i12"><use href="#up"/></svg></div>
 <div class="st-mid">
  <div class="st-doc">
   <div class="bar st-warn"><span class="clip-l"><span data-w="49">Windows</span></span><span data-w="60">Learn More</span><svg class="ic text-dark"><use href="#x"/></svg></div>
   <div class="st-crumb"><svg class="ic i10"><use href="#dn"/></svg></div>
   <div class="bar st-exp"><span data-w="55">Expand All</span><span data-w="61">Collapse All</span></div>
   <div class="st-can">
    <svg viewBox="3200 198 640 1134" font-family="Open Sans, Noto Sans, sans-serif" font-size="12">
     <g fill="none" stroke="#45464a"><path fill="#2b2d2e" d="M3190 420.500h226v24.500h-226z" stroke="none"/><path fill="#2b2d2e" stroke="none" d="M3190 515h32v25h-32zM3190 720h30v25h-30zM3190 950h20v24h-20z"/><path d="M3190 420.500h225.500v798H3190M3190 515.500h32.500v102.500H3190M3190 720.500h30.500v112H3190M3190 950.500h20.500v186.500H3190"/></g>
     <g fill="none" stroke="#434447" stroke-width="2"><path d="M3230 571h18q4 0 4 4v586q0 4-4 4h-58M3228 753h18q4 0 4 4v398q0 3.500-4 3.500h-56M3228 798h18q4 0 4 4"/></g>
     <g fill="#a9a9a9"><path d="M3222 571l10-5v10zM3220 753l10-5v10zM3220 798l10-5v10z"/></g>
     <g fill="#c4c4c4"><path d="M3385 426h2v2h-2zm0 6h2v2h-2zm0 6h2v2h-2zM3212 521h2v2h-2zm0 6h2v2h-2zm0 6h2v2h-2zM3210 726h2v2h-2zm0 6h2v2h-2zm0 6h2v2h-2zM3200 955h2v2h-2zm0 6h2v2h-2zm0 6h2v2h-2z"/><path d="M3401 433l5-4 5 4M3401 438l5-4 5 4" fill="none" stroke="#c4c4c4" stroke-width="1.500"/><path d="M3388 1210h3v3h-3zM3392 1210h3v3h-3zM3396 1210h3v3h-3zM3392 1206h3v3h-3zM3396 1206h3v3h-3zM3396 1202h3v3h-3z"/></g>
     <g fill="#6a6b6e"><path d="M3199 609h3v3h-3zM3203 609h3v3h-3zM3203 605h3v3h-3zM3199 605h3v3h-3zM3203 601h3v3h-3zM3200 823h3v3h-3zM3200 819h3v3h-3zM3200 815h3v3h-3z"/></g>
     <text x="3197" y="493.500" fill="#9b9b9b" textLength="151">and required external setup)]</text>
     <g fill="#1f2022" stroke="#d8d8d8"><rect x="3211.500" y="858.500" width="83" height="19.500" rx="9.700"/><rect x="3208.500" y="949.500" width="84" height="19" rx="9.500"/><rect x="3225.500" y="968.500" width="50" height="19" rx="9.500"/></g>
     <g fill="#f0f0f0"><text x="3216" y="872.500" textLength="73">System Exce...</text><text x="3213" y="963.500" textLength="74">Business Exc...</text><text x="3230" y="982.500" textLength="41">Success</text></g>
     <path d="M3251 858v20M3251 950v19" stroke="#434447" stroke-width="3" opacity=".7"/>
    </svg>
    <div class="st-sb"><span class="ar"><svg width="8" height="6"><path d="M0 6h8L4 0z" fill="#9a9a9a"/></svg></span><span class="th"><svg width="8" height="8"><path d="M0 1h8M0 3h8M0 5h8M0 7h8" stroke="#77787c"/></svg></span><span class="flex-fill"></span><span class="ar mb-1"><svg width="7" height="5"><path d="M0 0h7L3.500 5z" fill="#9a9a9a"/></svg></span></div>
   </div>
   <div class="bar st-zoom"><svg class="ic"><use href="#hand"/></svg><svg class="ic" transform="scale(-1 1)"><use href="#find"/></svg><span data-w="28">100%</span><svg width="7" height="5"><path d="M0 0h7L3.500 5z" fill="#9a9a9a"/></svg><svg class="ic"><use href="#fit"/></svg><svg class="ic"><use href="#fit2"/></svg></div>
  </div>
  <div>
   <div class="st-prop">
    <div class="bar pr-t"><span data-w="52">Properties</span><i class="dotline"></i><svg class="ic i10"><use href="#dn"/></svg><svg class="ic"><use href="#pin"/></svg></div>
    <div class="bar pr-s text-white"><span data-w="166">System.Activities.ActivityBuilder</span></div>
    <div class="bar pr-m text-white"><svg class="ic i12"><use href="#boxm"/></svg><b data-w="25">Misc</b></div>
    <div class="bar pr-d"><span data-w="70">DisplayName</span><span><span data-w="26">Main</span></span></div>
   </div>
   <div class="bar st-tabs"><svg class="ic"><use href="#orep"/></svg><span data-w="94">Object Repository</span><div class="bar on"><svg class="ic"><use href="#wr"/></svg><span data-w="53">Properties</span></div><svg class="ic ms-1"><use href="#outl"/></svg><span class="ms-1" data-w="39">Outline</span><svg class="ic ms-1"><use href="#dm"/></svg><span class="ms-1" data-w="74">Data Manager</span><svg class="ic ms-1"><use href="#te"/></svg><span class="ms-1" data-w="66">Test Explorer</span></div>
  </div>
 </div>
 <div class="bar st-blue"><svg class="ic i14"><use href="#asst"/></svg><svg class="ic i10"><use href="#dn"/></svg><svg width="8" height="8"><circle cx="4" cy="4" r="4" fill="#55c41c"/></svg><span data-w="157">dbev88@gmail.com's works...</span><svg class="ic i10"><use href="#dn"/></svg><svg class="ic"><use href="#pl2"/></svg><span data-w="119">Add To Source Control</span><svg class="ic i10"><use href="#dn"/></svg><span data-w="119">VB, Windows - Legacy</span></div>
</section>

<!-- Chrome with the RPA challenge -->
<section class="win ch">
 <div class="bar ch-top"><div class="bar ch-tab"><svg class="ic"><use href="#bot"/></svg><span data-w="76">Rpa Challenge</span><svg class="ic i14"><use href="#xb"/></svg></div><svg class="ic pl"><use href="#plus"/></svg><svg class="ic up"><use href="#dn"/></svg><svg class="ic up"><use href="#min"/></svg><svg class="ic up"><use href="#max"/></svg><svg class="ic up"><use href="#x"/></svg></div>
 <div class="bar ch-nav"><svg class="ic opacity-50"><use href="#back"/></svg><svg class="ic opacity-50"><use href="#fwd"/></svg><svg class="ic"><use href="#rel"/></svg>
  <div class="bar ch-omni"><svg class="ic i14 opacity-50"><use href="#lockf"/></svg><span data-w="108">rpachallenge.com</span><svg class="ic"><use href="#share"/></svg><svg class="ic"><use href="#starf"/></svg></div>
  <svg class="ic"><use href="#honey"/></svg><svg class="ic"><use href="#ring"/></svg><svg class="ic"><use href="#puzf"/></svg><svg class="ic"><use href="#panel"/></svg><div class="bar ch-err"><span class="ava">D</span><span data-w="26">Error</span></div><svg class="ic i14"><use href="#d3"/></svg></div>
 <div class="bar ch-bm"><svg class="ic i14"><use href="#yf"/></svg><span data-w="39">Trading</span><svg class="ic"><use href="#coin"/></svg><span data-w="49">Coinbase</span><svg class="ic"><use href="#keep"/></svg><span data-w="68">Google Keep</span><svg class="ic"><use href="#goo"/></svg><span data-w="101">CS&amp;D New Client...</span><svg class="ic"><use href="#fexa"/></svg><span data-w="24">Fexa</span><svg class="ic"><use href="#fj"/></svg><span data-w="105">FlexJobs Dashboard</span><svg class="ic"><use href="#bot"/></svg><span data-w="76">Rpa Challenge</span><i class="vline"></i><svg class="ic i14"><use href="#yf"/></svg><span data-w="93">Other bookmarks</span></div>
 <div class="ch-page">
  <aside class="ins">
   <div class="sky"><svg><use href="#tile"/></svg><svg><use href="#tile"/></svg></div>
   <div class="body-t">
    <div class="hd d-flex justify-content-between"><h5 data-w="139">Instructions</h5><span class="en"><span data-w="19">EN</span></span></div>
    <div class="lines"><div><span data-w="261">1. The goal of this challenge is to create a</span></div><div><span data-w="225">workflow that will input data from a</span></div><div><span data-w="247">spreadsheet into the form fields on the</span></div><div><span data-w="46">screen.</span></div><div>&nbsp;</div><div><span data-w="259">2. Beware! The fields will change position</span></div><div><span data-w="235">on the screen after every submission</span></div><div><span data-w="250">throughout 10 rounds thus the workflow</span></div><div><span data-w="221">must correctly identify where each</span></div><div><span data-w="261">spreadsheet record must be typed every</span></div><div><span data-w="32">time.</span></div><div>&nbsp;</div><div><span data-w="264">3. The actual countdown of the challenge</span></div><div><span data-w="258">will begin once you click the Start button</span></div><div><span data-w="243">until then you may submit the form as</span></div><div><span data-w="266">many times as you wish without receiving</span></div><div><span data-w="62">penalties.</span></div><div>&nbsp;</div><div><span data-w="68">Good luck!</span></div></div>
    <div class="x-down"><span data-w="140">DOWNLOAD EXCEL</span><svg class="ic"><use href="#cdl"/></svg></div>
    <div class="x-reset"><span data-w="43">RESET</span></div>
   </div>
  </aside>
  <main class="result"><div class="r1"><span data-w="301">Congratulations!</span></div><div class="r2"><span data-w="672">Your success rate is 30% ( 21 out of 70 fields) in 656950 milliseconds</span></div></main>
  <div class="sb"><svg class="a1" width="8" height="8"><path d="M0 6h8L4 2z" fill="#505050"/></svg><div class="thumb"></div><svg class="a2" width="8" height="8"><path d="M0 2h8L4 6z" fill="#a3a3a3"/></svg></div>
 </div>
</section>

<!-- second monitor taskbar -->
<section class="win tb tb-r">
 <div class="d-flex" id="tray-apps"></div>
 <div class="bar tray"><svg class="ic i14"><use href="#up"/></svg><svg class="ic"><use href="#tr-a"/></svg><svg class="ic"><use href="#tr-c"/></svg><svg class="ic"><use href="#tr-n"/></svg><svg class="ic"><use href="#tr-s"/></svg><span data-w="42">8:05 PM</span><svg class="ic"><use href="#tr-m"/></svg><i class="edge"></i></div>
</section>
</div></div>
<script>
// ten identical queue items
document.getElementById('rows').innerHTML = Array(10).fill('<div class="bar tr-bar"><i class="cbx"></i><span data-w="28">New</span><span class="n" data-w="34">None</span><span data-w="49">Normal</span><svg class="ic i18"><use href="#d3"/></svg></div>').join('');
// pinned and running apps: [icon, state]
document.getElementById('tray-apps').innerHTML = [['wn',''],['tf',''],['ffx','run'],['chr','run on'],['efd','run'],['plant',''],['ccl',''],['steam',''],['disc','run'],['nv',''],['wasp',''],['cor',''],['sblue','run two'],['pill',''],['fea',''],['drop',''],['game',''],['cpu','run'],['steam','run two'],['play','run']]
 .map(a => `<div class="cell ${a[1]}"><svg class="ic"><use href="#${a[0]}"/></svg></div>`).join('');
const k = document.getElementById('desk').getBoundingClientRect().width / 4480;
document.querySelectorAll('[data-w]').forEach(e => {
  const r = document.createRange(); r.selectNodeContents(e);
  const w = r.getBoundingClientRect().width / k, n = e.textContent.length;
  e.style.letterSpacing = ((+e.dataset.w - w) / n).toFixed(3) + 'px';
});
</script>
</body>
</html>
